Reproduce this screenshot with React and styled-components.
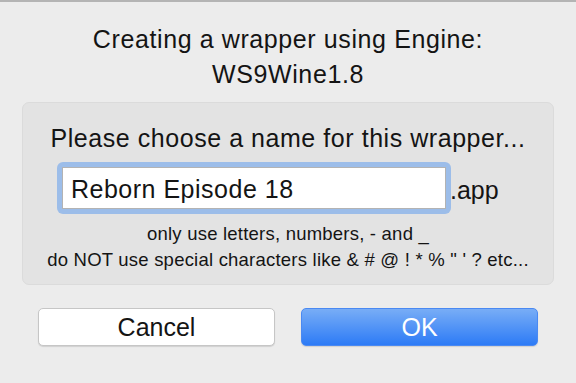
import React from 'react';
import styled, { createGlobalStyle } from 'styled-components';

const GlobalStyle = createGlobalStyle`
  html, body {
    margin: 0;
    padding: 0;
    background: #ececec;
  }
  body {
    font-family: 'Liberation Sans', Arial, sans-serif;
    color: #141414;
  }
`;

const Dialog = styled.div`
  width: 576px;
  height: 383px;
  box-sizing: border-box;
  border-top: 2px solid #b4b4b4;
  background: #ececec;
  display: flex;
  flex-direction: column;
  align-items: stretch;
`;

const Title = styled.div`
  margin-top: 20px;
  text-align: center;
  font-size: 25px;
  line-height: 35px;
  letter-spacing: 0.6px;
`;

const Panel = styled.div`
  margin: 10px 22px 0 22px;
  height: 183px;
  box-sizing: border-box;
  background: #e3e3e3;
  border: 1px solid #dbdbdb;
  border-radius: 7px;
  display: flex;
  flex-direction: column;
  align-items: center;
  padding-top: 20px;
`;

const Prompt = styled.div`
  font-size: 25px;
  line-height: 30px;
  letter-spacing: 0.55px;
`;

const InputRow = styled.div`
  display: flex;
  align-items: center;
  align-self: flex-start;
  margin: 9px 0 0 34px;
`;

const Ring = styled.div`
  width: 394px;
  height: 52px;
  box-sizing: border-box;
  padding: 5px;
  border-radius: 6px;
  background: #9cbde9;
`;

const Field = styled.input`
  width: 100%;
  height: 100%;
  box-sizing: border-box;
  border: 1px solid #b3b3b3;
  background: #fff;
  font-family: inherit;
  font-size: 25px;
  letter-spacing: 0.5px;
  padding: 2px 8px 0 8px;
  color: #141414;
  outline: none;
`;

const Suffix = styled.span`
  font-size: 25px;
  line-height: 30px;
  margin-top: 3px;
  margin-left: -1px;
`;

const Hint = styled.div`
  margin-top: 7px;
  font-size: 18.5px;
  line-height: 25.5px;
  letter-spacing: 0.22px;
  text-align: center;
`;

const Buttons = styled.div`
  display: flex;
  gap: 26px;
  margin: 23px 38px 0 38px;
`;

const Button = styled.button`
  flex: 1;
  height: 38px;
  padding: 0;
  border-radius: 5px;
  font-family: inherit;
  font-size: 25px;
  cursor: pointer;
  border: 1px solid ${p => (p.$primary ? '#4a89f2' : '#c6c6c6')};
  color: ${p => (p.$primary ? '#fff' : '#141414')};
  background: ${p =>
    p.$primary ? 'linear-gradient(#78adf6, #2d7bf6)' : '#fff'};
  box-shadow: 0 1px 1px rgba(0, 0, 0, 0.12);
`;

export default function App() {
  return (
    <>
      <GlobalStyle />
      <Dialog>
        <Title>
          Creating a wrapper using Engine:
          <br />
          WS9Wine1.8
        </Title>
        <Panel>
          <Prompt>Please choose a name for this wrapper...</Prompt>
          <InputRow>
            <Ring>
              <Field defaultValue="Reborn Episode 18" />
            </Ring>
            <Suffix>.app</Suffix>
          </InputRow>
          <Hint>
            only use letters, numbers, - and _
            <br />
            do NOT use special characters like &amp; # @ ! * % " ' ? etc...
          </Hint>
        </Panel>
        <Buttons>
          <Button>Cancel</Button>
          <Button $primary>OK</Button>
        </Buttons>
      </Dialog>
    </>
  );
}
